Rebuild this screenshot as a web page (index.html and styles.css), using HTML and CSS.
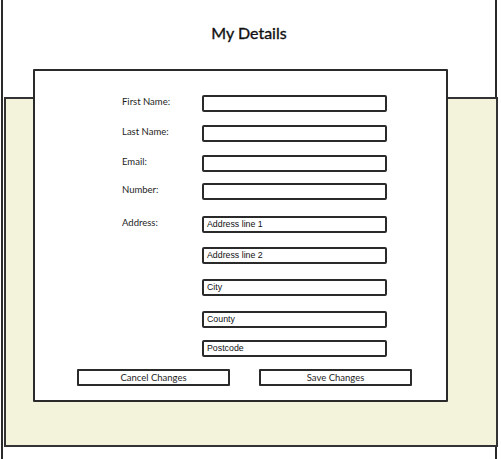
FILE: index.html
```html
<!DOCTYPE html>
<html>
<head>
<meta charset="utf-8">
<link rel="stylesheet" href="styles.css">
</head>
<body>
<div class="frame">
  <header class="header"><h1 class="title">My Details</h1></header>
  <div class="stage">
    <div class="panel"></div>
    <form class="card">
      <div class="fields">
        <div class="row"><span class="label">First Name:</span><span class="input"></span></div>
        <div class="row"><span class="label">Last Name:</span><span class="input"></span></div>
        <div class="row"><span class="label">Email:</span><span class="input"></span></div>
        <div class="row row-tight"><span class="label">Number:</span><span class="input"></span></div>
        <div class="row row-loose"><span class="label">Address:</span><span class="input">Address line 1</span></div>
        <div class="row row-wide"><span class="label"></span><span class="input">Address line 2</span></div>
        <div class="row row-wide2"><span class="label"></span><span class="input">City</span></div>
        <div class="row row-wide2"><span class="label"></span><span class="input">County</span></div>
        <div class="row row-tight2"><span class="label"></span><span class="input">Postcode</span></div>
      </div>
      <div class="actions">
        <span class="button">Cancel Changes</span>
        <span class="button">Save Changes</span>
      </div>
    </form>
  </div>
</div>
</body>
</html>
```

FILE: styles.css
```css
html, body {
  margin: 0;
  padding: 0;
  background: #ffffff;
  overflow: hidden;
}

body {
  width: 501px;
  height: 459px;
  font-family: Lato, "Open Sans", sans-serif;
  color: #222;
}

.frame {
  margin-left: 1px;
  width: 496px;
  height: 470px;
  box-sizing: border-box;
  border-left: 2px solid #2a2a2a;
  border-right: 2px solid #2a2a2a;
}

.header {
  height: 69px;
  box-sizing: border-box;
  padding-top: 23px;
}

.title {
  margin: 0;
  text-align: center;
  font-size: 16px;
  line-height: 20px;
  font-weight: 400;
  -webkit-text-stroke: 0.35px #111;
  color: #111;
}

.stage {
  display: grid;
}

.panel,
.card {
  grid-area: 1 / 1;
}

.panel {
  margin-top: 28px;
  margin-left: 1px;
  width: 494px;
  height: 350px;
  box-sizing: border-box;
  background: #f3f3dc;
  border: 2px solid #333;
}

.card {
  margin: 0 0 0 30px;
  width: 415px;
  height: 333px;
  box-sizing: border-box;
  background: #fff;
  border: 2px solid #2a2a2a;
  border-radius: 1px;
  padding-top: 24px;
  justify-self: start;
  align-self: start;
}

.fields {
  display: flex;
  flex-direction: column;
  gap: 13px;
}

.row {
  display: grid;
  grid-template-columns: 167px 185px;
  align-items: start;
}

.row-tight { margin-top: -2px; }
.row-loose { margin-top: 3px; }
.row-wide { margin-top: 1px; }
.row-wide2 { margin-top: 2px; }
.row-tight2 { margin-top: -1px; }

.label {
  padding-left: 87px;
  padding-top: 1px;
  font-size: 9.5px;
  line-height: 11px;
  color: #1e1e1e;
}

.input {
  height: 17px;
  box-sizing: border-box;
  border: 2px solid #2a2a2a;
  border-radius: 2px;
  padding: 1px 0 0 3px;
  font-family: "Liberation Sans", Arial, sans-serif;
  font-size: 8.8px;
  line-height: 11px;
  color: #111;
}

.actions {
  display: flex;
  gap: 29px;
  padding-left: 42px;
  margin-top: 12px;
}

.button {
  width: 153px;
  height: 17px;
  box-sizing: border-box;
  border: 2px solid #2a2a2a;
  border-radius: 1px;
  text-align: center;
  font-size: 9.5px;
  line-height: 11px;
  padding-top: 1px;
  color: #1e1e1e;
}
```
